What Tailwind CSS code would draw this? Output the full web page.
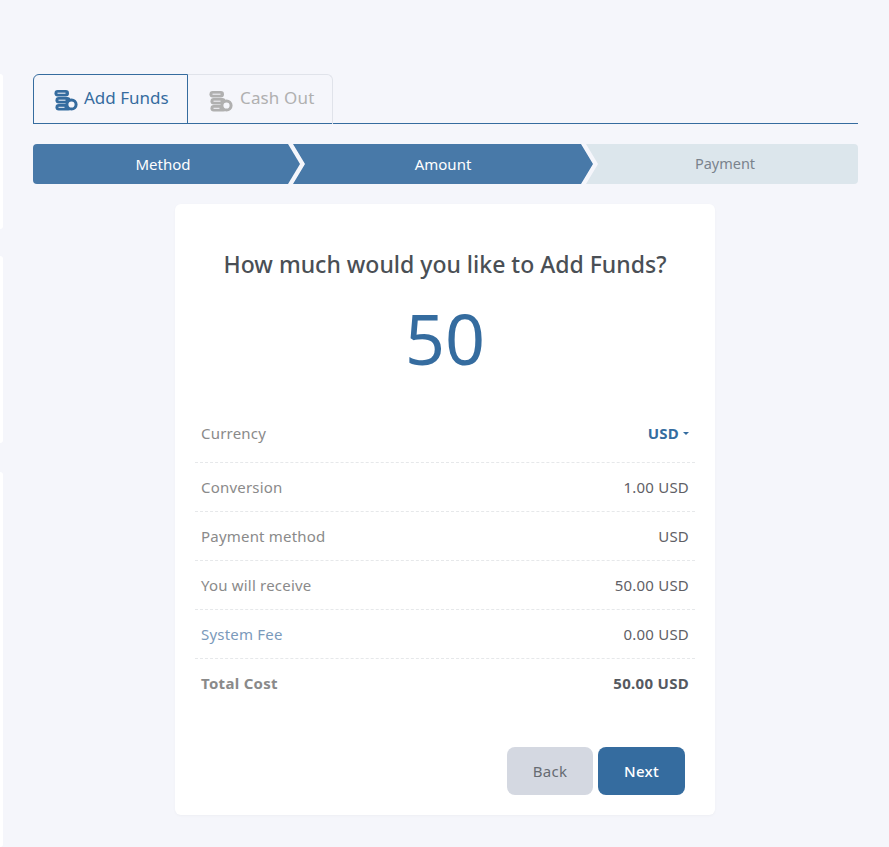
<!DOCTYPE html>
<html><head><meta charset="utf-8"><script src="https://cdn.jsdelivr.net/npm/@tailwindcss/browser@4"></script></head>
<body class="bg-[#f5f6fb] font-['Noto_Sans',sans-serif] overflow-hidden">
<div class="relative w-[889px] h-[847px] pl-[33px] pr-[31px] pt-[74px]">
  <div class="absolute left-0 top-[74px] w-[3px] h-[155px] bg-white rounded-r"></div>
  <div class="absolute left-0 top-[256px] w-[3px] h-[187px] bg-white rounded-r"></div>
  <div class="absolute left-0 top-[472px] w-[3px] h-[375px] bg-white rounded-r"></div>

  <div class="flex h-[50px] border-b border-[#356c9f]">
    <div class="flex items-center w-[155px] h-[50px] pl-[20px] gap-[6px] border border-[#356c9f] rounded-tl-md text-[#356c9f] text-[17px]">
      <svg width="24" height="24" viewBox="0 0 24 24"><g fill="currentColor"><rect x="0.5" y="3" width="14.5" height="6.5" rx="3.2"/><rect x="1.5" y="10" width="15" height="6.5" rx="3.2"/><rect x="1.5" y="17" width="16" height="6.5" rx="3.2"/></g><g fill="#f5f6fb"><rect x="3.5" y="5.7" width="8" height="1"/><rect x="4.5" y="12.7" width="7" height="1"/><rect x="4.5" y="19.8" width="6" height="1"/></g><circle cx="17.5" cy="17.5" r="4.6" fill="#f5f6fb" stroke="currentColor" stroke-width="3"/></svg>
      <span class="pb-[3px]">Add Funds</span>
    </div>
    <div class="flex items-center w-[145px] h-[50px] pl-[21px] gap-[7px] border-t border-r border-[#e0e3ea] rounded-tr-md text-[#b0b0b0] text-[17px]">
      <svg width="24" height="24" viewBox="0 0 24 24"><g fill="currentColor"><rect x="0.5" y="3" width="14.5" height="6.5" rx="3.2"/><rect x="1.5" y="10" width="15" height="6.5" rx="3.2"/><rect x="1.5" y="17" width="16" height="6.5" rx="3.2"/></g><g fill="#f5f6fb"><rect x="3.5" y="5.7" width="8" height="1"/><rect x="4.5" y="12.7" width="7" height="1"/><rect x="4.5" y="19.8" width="6" height="1"/></g><circle cx="17.5" cy="17.5" r="4.6" fill="#f5f6fb" stroke="currentColor" stroke-width="3"/></svg>
      <span class="pb-[3px] tracking-[0.15px]">Cash Out</span>
    </div>
  </div>

  <div class="relative flex h-10 mt-5 text-[15px]">
    <div class="flex items-center justify-center w-[272px] h-10 bg-[#4879a8] text-white rounded-l [clip-path:polygon(0_0,255px_0,267px_50%,255px_100%,0_100%)]"><span class="pr-[12px]">Method</span></div>
    <div class="flex items-center justify-center w-[300px] -ml-[12px] h-10 bg-[#4879a8] text-white [clip-path:polygon(0_0,288px_0,300px_50%,288px_100%,0_100%,12px_50%)]"><span>Amount</span></div>
    <div class="flex items-center justify-center flex-1 -ml-[7px] h-10 bg-[#dce6ec] text-[#7a838d] rounded-r [clip-path:polygon(0_0,100%_0,100%_100%,0_100%,12px_50%)]"><span class="pl-[6px] text-[14.5px]">Payment</span></div>
  </div>

  <div class="w-[540px] h-[611px] mt-5 ml-[142px] bg-white rounded-md shadow-[0_1px_3px_rgba(0,0,0,0.03)] px-5 pt-[42px]">
    <h2 class="text-center text-[23px] leading-9 font-medium text-[#4a4f55]">How much would you like to Add Funds?</h2>
    <div class="text-center text-[70px] leading-[80px] mt-[16px] text-[#356c9f]">50</div>
    <div class="mt-[16px] text-[15px] tracking-[0.2px] text-[#8a8a8a]">
      <div class="flex items-center justify-between h-[69px] pt-[11px] px-[6px] border-b border-dashed border-[#e6e8ea]"><span>Currency</span><span class="flex items-center gap-1 font-bold text-[#356c9f]">USD<span class="w-0 h-0 border-x-[3px] border-x-transparent border-t-[3px] border-t-[#356c9f]"></span></span></div>
      <div class="flex items-center justify-between h-[49px] px-[6px] border-b border-dashed border-[#e6e8ea]"><span>Conversion</span><span class="text-[#5f5f66]">1.00 USD</span></div>
      <div class="flex items-center justify-between h-[49px] px-[6px] border-b border-dashed border-[#e6e8ea]"><span>Payment method</span><span class="text-[#5f5f66]">USD</span></div>
      <div class="flex items-center justify-between h-[49px] px-[6px] border-b border-dashed border-[#e6e8ea]"><span>You will receive</span><span class="text-[#5f5f66]">50.00 USD</span></div>
      <div class="flex items-center justify-between h-[49px] px-[6px] border-b border-dashed border-[#e6e8ea]"><span class="text-[#7b9abb]">System Fee</span><span class="text-[#5f5f66]">0.00 USD</span></div>
      <div class="flex items-center justify-between h-[49px] px-[6px] font-bold tracking-[0.3px]"><span>Total Cost</span><span class="text-[#55595f]">50.00 USD</span></div>
    </div>
    <div class="flex justify-end gap-[5px] mt-[39px] pr-[10px] text-[15px]">
      <div class="flex items-center justify-center w-[86px] h-12 rounded-lg bg-[#d4d8e1] text-[#666b72] tracking-[0.3px]">Back</div>
      <div class="flex items-center justify-center w-[87px] h-12 rounded-lg bg-[#356c9f] text-white font-medium tracking-[0.3px]">Next</div>
    </div>
  </div>
</div>
</body></html>
